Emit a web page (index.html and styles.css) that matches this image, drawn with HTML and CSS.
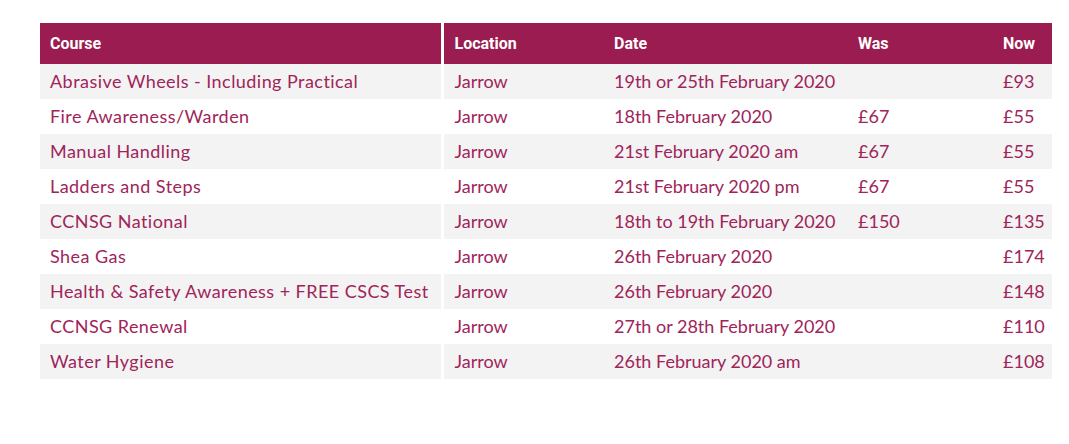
FILE: index.html
```html
<!DOCTYPE html>
<html>
<head>
<meta charset="utf-8">
<link rel="stylesheet" href="styles.css">
</head>
<body>
<div class="wrap">
<table class="courses">
  <colgroup>
    <col class="c-course"><col class="c-loc"><col class="c-date"><col class="c-was"><col class="c-now">
  </colgroup>
  <thead>
    <tr><th class="first">Course</th><th>Location</th><th>Date</th><th>Was</th><th>Now</th></tr>
  </thead>
  <tbody>
    <tr><td class="first">Abrasive Wheels - Including Practical</td><td>Jarrow</td><td>19th or 25th February 2020</td><td></td><td>£93</td></tr>
    <tr><td class="first">Fire Awareness/Warden</td><td>Jarrow</td><td>18th February 2020</td><td>£67</td><td>£55</td></tr>
    <tr><td class="first">Manual Handling</td><td>Jarrow</td><td>21st February 2020 am</td><td>£67</td><td>£55</td></tr>
    <tr><td class="first">Ladders and Steps</td><td>Jarrow</td><td>21st February 2020 pm</td><td>£67</td><td>£55</td></tr>
    <tr><td class="first">CCNSG National</td><td>Jarrow</td><td>18th to 19th February 2020</td><td>£150</td><td>£135</td></tr>
    <tr><td class="first">Shea Gas</td><td>Jarrow</td><td>26th February 2020</td><td></td><td>£174</td></tr>
    <tr><td class="first">Health &amp; Safety Awareness + FREE CSCS Test</td><td>Jarrow</td><td>26th February 2020</td><td></td><td>£148</td></tr>
    <tr><td class="first">CCNSG Renewal</td><td>Jarrow</td><td>27th or 28th February 2020</td><td></td><td>£110</td></tr>
    <tr><td class="first">Water Hygiene</td><td>Jarrow</td><td>26th February 2020 am</td><td></td><td>£108</td></tr>
  </tbody>
</table>
</div>
</body>
</html>
```
FILE: styles.css
```css
html, body { margin: 0; padding: 0; background: #fff; }
.wrap { padding: 23px 17px 0 40px; }
.courses {
  width: 1012px;
  border-collapse: collapse;
  table-layout: fixed;
  font-family: "Lato", "Open Sans", sans-serif;
}
.c-course { width: 402px; }
.c-loc { width: 162px; }
.c-date { width: 244px; }
.c-was { width: 145px; }
.c-now { width: 59px; }
.courses th {
  background: #9b1c50;
  color: #fff;
  height: 41px;
  padding: 0 10px;
  text-align: left;
  font-family: "Liberation Sans Narrow", "Roboto", sans-serif;
  font-weight: bold;
  font-size: 16px;
  box-sizing: border-box;
}
.courses td {
  height: 35px;
  padding: 0 10px 2px;
  color: #a0245a;
  font-size: 18px;
  white-space: nowrap;
  box-sizing: border-box;
}
.courses td.first { letter-spacing: 0.45px; }
.courses tbody tr:nth-child(odd) td { background: #f3f3f3; }
.courses .first { border-right: 3px solid #fff; }
.courses td:nth-child(2), .courses th:nth-child(2) { padding-left: 11px; }
```
